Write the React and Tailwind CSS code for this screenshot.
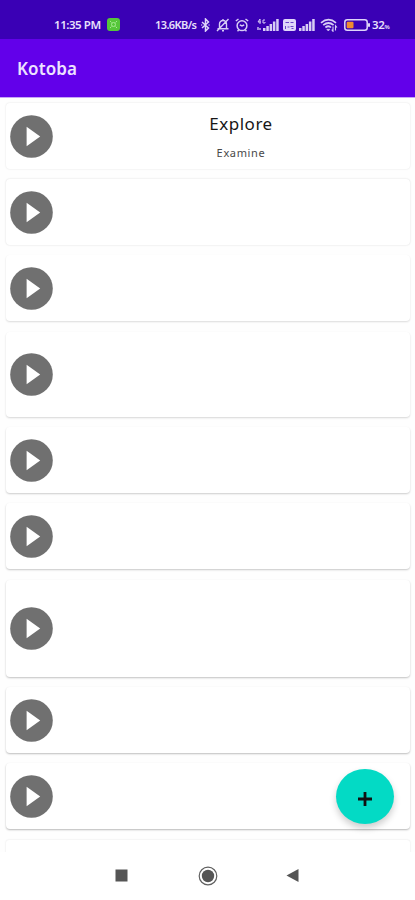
const cards = [
  { size: "h-[66px]", shadow: "shadow-[0_0_2px_rgba(0,0,0,0.13)]", title: "Explore", subtitle: "Examine" },
  { size: "h-[66px]", shadow: "shadow-[0_0_2px_rgba(0,0,0,0.16)]" },
  { size: "h-[66px] mb-[1px]", shadow: "shadow-[0_1px_2px_rgba(0,0,0,0.14)]" },
  { size: "h-[85px]", shadow: "shadow-[0_1px_2px_rgba(0,0,0,0.16)]" },
  { size: "h-[66px]", shadow: "shadow-[0_1px_2px_rgba(0,0,0,0.2)]" },
  { size: "h-[66px] mb-[1px]", shadow: "shadow-[0_1px_2px_rgba(0,0,0,0.22)]" },
  { size: "h-[97px]", shadow: "shadow-[0_1px_2px_rgba(0,0,0,0.24)]" },
  { size: "h-[66px]", shadow: "shadow-[0_1px_2px_rgba(0,0,0,0.26)]" },
  { size: "h-[66px] mb-[1px]", shadow: "shadow-[0_1px_2px_rgba(0,0,0,0.28)]" },
];

function Signal({ className }) {
  return (
    <svg className={className} width="16" height="12" viewBox="0 0 16 12" fill="#d8cdf5">
      <rect x="0" y="9" width="2.5" height="3" />
      <rect x="3.3" y="7" width="2.5" height="5" />
      <rect x="6.6" y="5" width="2.5" height="7" />
      <rect x="9.9" y="2.5" width="2.5" height="9.5" />
      <rect x="13.2" y="0" width="2.5" height="12" />
    </svg>
  );
}

function StatusBar() {
  return (
    <div className="flex h-[39px] shrink-0 items-center bg-[#3a00b5] pt-[10px] pl-[54px] text-[#e8e0fb]">
      <span className="w-[48px] text-[11.5px] leading-none font-semibold whitespace-nowrap tracking-[-0.45px]">11:35 PM</span>
      <span className="ml-[5px] flex size-[13px] items-center justify-center rounded-[3px] bg-[#55c63a]">
        <svg width="9" height="9" viewBox="0 0 9 9" fill="none" stroke="#a4eb91">
          <circle cx="4.5" cy="4.5" r="2" />
          <path d="M1 1l1.5 1.5M8 1L6.5 2.5M1 8l1.5-1.5M8 8L6.5 6.5" />
        </svg>
      </span>
      <span className="ml-[35px] w-[44px] text-[11px] leading-none font-semibold whitespace-nowrap tracking-[-0.6px]">13.6KB/s</span>
      <svg className="ml-[2px]" width="9" height="14" viewBox="0 0 9 14" fill="none" stroke="#e0d7fa" strokeWidth="1.5">
        <path d="M1 4l6.5 6L4.5 13V1l3 3L1 10" />
        <path d="M.3 7h.9M7.6 7h.9" />
      </svg>
      <svg className="ml-[6px]" width="14" height="14" viewBox="0 0 14 14" fill="none" stroke="#d8cdf5" strokeWidth="1.4">
        <path d="M1.5 10.7h11M3.5 10V6a3.5 3.5 0 0 1 7 0v4M6 12.8h2M7 1v1.5M1 13L12.5 1" />
      </svg>
      <svg className="ml-[5px]" width="14" height="14" viewBox="0 0 14 14" fill="none" stroke="#d8cdf5" strokeWidth="1.5">
        <circle cx="7" cy="7.7" r="4.9" />
        <path d="M.8 3l2.7-2M13.2 3l-2.7-2M4.8 6.8L7 8l2.2-1.2M2.5 13.2l1.2-1.2M11.5 13.2L10.3 12" />
      </svg>
      <svg className="ml-[8px]" width="9" height="13" viewBox="0 0 9 13" fill="none" stroke="#d8cdf5">
        <path d="M3 1L1 4h3M3 1v5M8 2H6v3h2V4" />
        <path d="M1 9v3M3 10v2" strokeWidth="1.3" />
      </svg>
      <Signal className="-ml-[3px]" />
      <svg className="ml-[4px]" width="13" height="12" viewBox="0 0 13 12">
        <rect width="13" height="12" rx="2" fill="#e0d7fa" />
        <path d="M2.5 3.5H6M7.5 3.5h3M2.5 7v3M4.5 8h2M7.5 7.5h3M8.5 9.5h2" stroke="#6b44c8" strokeWidth="1" fill="none" />
      </svg>
      <Signal className="ml-[3px]" />
      <svg className="ml-[5px]" width="18" height="14" viewBox="0 0 18 14" fill="none" stroke="#d8cdf5" strokeWidth="1.7">
        <path d="M1 4.8Q8.5 -1.5 16 4.8M3.2 7.2Q8.5 2.8 13.6 7.2M5.4 9.5Q8.5 7 11 9.5" />
        <path d="M6.8 11.3h3L8.3 13z" fill="#d8cdf5" strokeWidth=".7" />
        <path d="M13 8.5v4.8l-1.3-1.6M15.5 12.5V7.8l1.5 1.7" strokeWidth="1.1" />
      </svg>
      <svg className="ml-[6px]" width="27" height="12" viewBox="0 0 27 12">
        <rect x=".8" y=".8" width="22.4" height="10.4" rx="2.5" fill="none" stroke="#ded4fa" strokeWidth="1.5" />
        <rect x="2.7" y="2.7" width="6.8" height="6.6" rx="1" fill="#f08b2f" />
        <path d="M25 4.2v3.6" stroke="#ded4fa" strokeWidth="2" />
      </svg>
      <span className="ml-[1px] flex items-baseline text-[11.5px] leading-none font-semibold tracking-[-0.3px]">
        32<span className="text-[6px]">%</span>
      </span>
    </div>
  );
}

function WordCard({ size, shadow, title, subtitle }) {
  return (
    <section className={`flex shrink-0 items-center rounded-[4px] bg-white pl-1 ${size} ${shadow}`}>
      <svg className="shrink-0" width="43" height="43" viewBox="0 0 43 43">
        <circle cx="21.5" cy="21.5" r="21.3" fill="#707070" />
        <path d="M16.6 11.8v19.4l13.6-9.7z" fill="#fff" />
      </svg>
      {title && (
        <div className="flex flex-1 flex-col items-center pr-[1px] pl-[20px]">
          <h2 className="text-[17px] leading-[24px] tracking-[0.5px] text-[#171717]">{title}</h2>
          <p className="mt-[9px] text-[11px] leading-[16px] tracking-[0.65px] text-[#484848]">{subtitle}</p>
        </div>
      )}
    </section>
  );
}

export default function App() {
  return (
    <div className="relative flex h-[900px] w-[415px] flex-col overflow-hidden bg-white font-['Noto_Sans',sans-serif]">
      <StatusBar />
      <header className="flex h-[58px] shrink-0 items-center bg-[#6200ea] pl-[17px]">
        <h1 className="pt-[1px] text-[17px] leading-none font-semibold tracking-[0.1px] text-[#ede2ff]">Kotoba</h1>
      </header>
      <main className="flex h-[755px] shrink-0 flex-col gap-[10px] overflow-hidden border-t border-[#c6a6f6] bg-[#fefefe] pt-[5px] pr-[5px] pl-[6px]">
        {cards.map((card, index) => (
          <WordCard key={index} {...card} />
        ))}
        <section className="h-[66px] shrink-0 rounded-[3px] bg-white shadow-[0_0_2px_rgba(0,0,0,0.12)]" />
      </main>
      <nav className="flex flex-1 bg-white pt-[17px] pl-[115px]">
        <svg width="13" height="13" viewBox="0 0 13 13">
          <rect x=".5" y=".5" width="12" height="12" fill="#555" />
        </svg>
        <svg className="-mt-[3px] ml-[70px]" width="20" height="20" viewBox="0 0 20 20">
          <circle cx="10" cy="10" r="8.8" fill="none" stroke="#606060" strokeWidth="1.2" />
          <circle cx="10" cy="10" r="6.2" fill="#555" />
        </svg>
        <svg className="ml-[68px]" width="13" height="14" viewBox="0 0 13 14">
          <path d="M.5 6.5L12.5 0v13z" fill="#555" />
        </svg>
      </nav>
      <button aria-label="Add" className="absolute top-[769px] left-[336px] flex h-[55px] w-[58px] items-center justify-center rounded-[50%] bg-[#03dac5] shadow-[0_4px_7px_rgba(0,0,0,0.2)]">
        <svg className="mt-[4px]" width="14" height="14" viewBox="0 0 14 14" stroke="#111" strokeWidth="2.8">
          <path d="M7 0v14M0 7h14" />
        </svg>
      </button>
    </div>
  );
}
